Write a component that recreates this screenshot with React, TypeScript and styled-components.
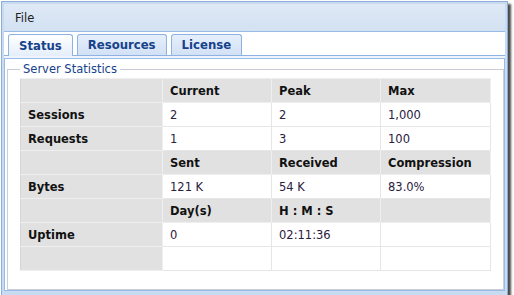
import React, { FC } from "react";
import styled, { createGlobalStyle } from "styled-components";

const GlobalStyle = createGlobalStyle`
  html, body {
    margin: 0;
    padding: 0;
    background: #ffffff;
  }
  body {
    font-family: "DejaVu Sans", Verdana, sans-serif;
  }
`;

type Cell = { text: string };
type Row = { label: string; cells: Cell[]; head?: boolean };

const rows: Row[] = [
  { label: "", head: true, cells: [{ text: "Current" }, { text: "Peak" }, { text: "Max" }] },
  { label: "Sessions", cells: [{ text: "2" }, { text: "2" }, { text: "1,000" }] },
  { label: "Requests", cells: [{ text: "1" }, { text: "3" }, { text: "100" }] },
  { label: "", head: true, cells: [{ text: "Sent" }, { text: "Received" }, { text: "Compression" }] },
  { label: "Bytes", cells: [{ text: "121 K" }, { text: "54 K" }, { text: "83.0%" }] },
  { label: "", head: true, cells: [{ text: "Day(s)" }, { text: "H : M : S" }, { text: "" }] },
  { label: "Uptime", cells: [{ text: "0" }, { text: "02:11:36" }, { text: "" }] },
  { label: "", cells: [{ text: "" }, { text: "" }, { text: "" }] },
];

const tabs = ["Status", "Resources", "License"];

const App: FC = () => {
  return (
    <>
      <GlobalStyle />
      <Window>
        <MenuBar>
          <MenuItem>File</MenuItem>
        </MenuBar>
        <TabStrip>
          {tabs.map((t, i) => (
            <Tab key={t} $active={i === 0}>
              {t}
            </Tab>
          ))}
        </TabStrip>
        <StripBottom />
        <PanelBody>
          <FieldSet>
            <Legend>Server Statistics</Legend>
            <StatsTable>
              <colgroup>
                <col style={{ width: 142 }} />
                <col style={{ width: 109 }} />
                <col style={{ width: 109 }} />
                <col style={{ width: 110 }} />
              </colgroup>
              <tbody>
                {rows.map((r, i) => (
                  <tr key={i}>
                    <LabelCell>{r.label}</LabelCell>
                    {r.cells.map((c, j) => (
                      <ValueCell key={j} $head={r.head}>
                        {c.text}
                      </ValueCell>
                    ))}
                  </tr>
                ))}
              </tbody>
            </StatsTable>
          </FieldSet>
        </PanelBody>
      </Window>
    </>
  );
};

export default App;

const Window = styled.div`
  margin: 1px 0 0 1px;
  width: 501px;
  height: 287px;
  border: 1px solid #8eaed8;
  background: #c9dbf1;
  padding: 2px 2px 6px 2px;
  display: flex;
  flex-direction: column;
  box-shadow: 3px 3px 2px rgba(30, 30, 30, 0.8);
`;

const MenuBar = styled.div`
  height: 27px;
  display: flex;
  align-items: center;
  background: linear-gradient(#dfe9f6, #d3e1f2);
  border-bottom: 1px solid #99bbe8;
  padding-left: 11px;
`;

const MenuItem = styled.span`
  font-size: 11.5px;
  color: #222;
`;

const TabStrip = styled.div`
  height: 23px;
  background: #ffffff;
  display: flex;
  align-items: flex-end;
  gap: 4px;
  padding-left: 4px;
`;

const Tab = styled.div<{ $active?: boolean }>`
  height: ${(p) => (p.$active ? "22px" : "21px")};
  margin-bottom: ${(p) => (p.$active ? "-1px" : "0")};
  box-sizing: border-box;
  padding: 0 10px;
  border: 1px solid #8db2e3;
  border-bottom: none;
  border-radius: 3px 3px 0 0;
  background: ${(p) =>
    p.$active
      ? "linear-gradient(#ffffff, #e4eefb)"
      : "linear-gradient(#e6effb, #d2e1f5)"};
  color: #15428b;
  font-weight: bold;
  font-size: 11.7px;
  display: flex;
  align-items: center;
  position: relative;
  z-index: 1;
`;

const StripBottom = styled.div`
  height: 2px;
  background: #eef4fc;
  border-top: 1px solid #8db2e3;
  border-bottom: 1px solid #99bbe8;
`;

const PanelBody = styled.div`
  flex: 1;
  background: #ffffff;
  border: 1px solid #99bbe8;
  border-top: none;
  padding: 3px 0 0 2px;
  overflow: hidden;
  display: flex;
`;

const FieldSet = styled.fieldset`
  flex: 1;
  margin: 0;
  border: 1px solid #c9ccd6;
  border-right-color: #d0d0d0;
  padding: 2px 12px 8px 12px;
`;

const Legend = styled.legend`
  padding: 0 3px;
  font-size: 11.5px;
  color: #15428b;
  line-height: 14px;
`;

const StatsTable = styled.table`
  width: 470px;
  border-collapse: collapse;
  table-layout: fixed;
  border-top: 1px solid #c8d9ef;
  border-left: 1px solid #d6d6d6;
  border-right: 1px solid #d6d6d6;
`;

const LabelCell = styled.td`
  height: 23px;
  padding: 0 7px;
  background: #e1e1e1;
  border: 1px solid #efefef;
  border-left: none;
  font-size: 11.5px;
  font-weight: bold;
  color: #111;
  white-space: nowrap;
`;

const ValueCell = styled.td<{ $head?: boolean }>`
  height: 23px;
  padding: 0 7px;
  background: ${(p) => (p.$head ? "#e1e1e1" : "#ffffff")};
  border: 1px solid ${(p) => (p.$head ? "#efefef" : "#e6e6e6")};
  font-size: 11.5px;
  font-weight: ${(p) => (p.$head ? "bold" : "normal")};
  color: ${(p) => (p.$head ? "#111" : "#2a2040")};
  white-space: nowrap;
`;
